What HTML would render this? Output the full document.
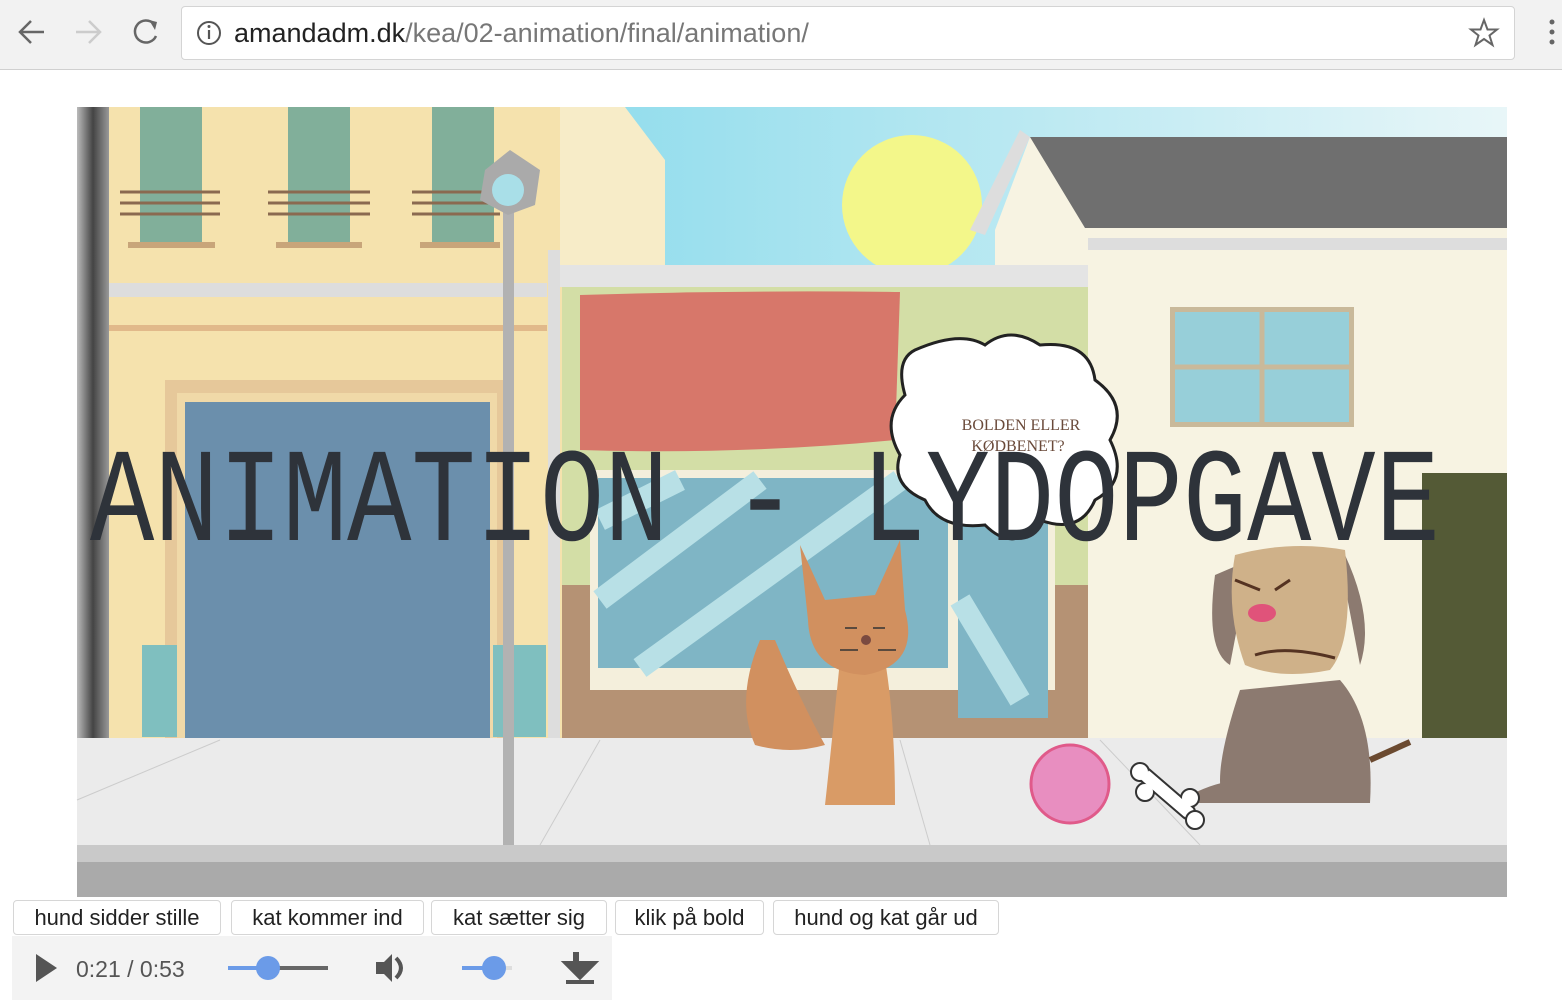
<!DOCTYPE html>
<html><head><meta charset="utf-8"><style>
body{margin:0;width:1562px;height:1004px;overflow:hidden;background:#fff;font-family:"Liberation Sans",sans-serif;position:relative}
.bar{position:absolute;left:0;top:0;width:1562px;height:69px;background:#f2f2f2;border-bottom:1px solid #d0d0d0}
.url{position:absolute;left:181px;top:6px;width:1332px;height:52px;background:#fff;border:1px solid #d4d4d4;border-radius:4px}
.url span{position:absolute;left:52px;top:11px;font-size:27px;color:#222}
.url i{font-style:normal;color:#777}
.btn{position:absolute;top:900px;height:33px;border:1px solid #d6d6d6;border-radius:4px;background:#fff;font-size:22px;line-height:33px;text-align:center;color:#222}
.ctl{position:absolute;left:12px;top:936px;width:600px;height:64px;background:#f3f3f3}
</style></head><body>
<div class="bar">
<svg width="180" height="69" style="position:absolute;left:0;top:0">
<path d="M44 32H20M31 21L20 32L31 43" stroke="#666" stroke-width="2.5" fill="none"/>
<path d="M76 32H100M89 21L100 32L89 43" stroke="#ccc" stroke-width="2.5" fill="none"/>
<path d="M154 24A11 11 0 1 0 156 36" stroke="#666" stroke-width="2.5" fill="none"/><path d="M149 20L157 22L155 30Z" fill="#666"/>
</svg>
<div class="url">
<svg width="40" height="52" style="position:absolute;left:10px;top:0"><circle cx="17" cy="26" r="11" stroke="#555" stroke-width="2" fill="none"/><path d="M17 23V32" stroke="#555" stroke-width="2.2"/><circle cx="17" cy="19.5" r="1.5" fill="#555"/></svg>
<span>amandadm.dk<i>/kea/02-animation/final/animation/</i></span>
<svg width="40" height="52" style="position:absolute;right:10px;top:0"><path d="M20 13L23.5 22.5L33 22.5L25.5 28.5L28.5 38L20 32L11.5 38L14.5 28.5L7 22.5L16.5 22.5Z" stroke="#666" stroke-width="2" fill="none"/></svg>
</div>
<svg width="20" height="69" style="position:absolute;left:1542px;top:0"><circle cx="10" cy="22" r="2.5" fill="#666"/><circle cx="10" cy="32" r="2.5" fill="#666"/><circle cx="10" cy="42" r="2.5" fill="#666"/></svg>
</div>

<svg width="1562" height="900" style="position:absolute;left:0;top:0">
<defs>
<linearGradient id="sky" x1="0" x2="1"><stop offset="0" stop-color="#8fdcec"/><stop offset="1" stop-color="#e8f6f8"/></linearGradient>
<linearGradient id="edge" x1="0" x2="1"><stop offset="0" stop-color="#bbb"/><stop offset="0.5" stop-color="#444"/><stop offset="1" stop-color="#999"/></linearGradient>
</defs>
<rect x="560" y="107" width="947" height="170" fill="url(#sky)"/>
<circle cx="912" cy="205" r="70" fill="#f3f78a"/>
<rect x="107" y="107" width="455" height="633" fill="#f5e2ad"/>
<path d="M560 107H625L665 160V277H560Z" fill="#f7ecc8"/>
<rect x="140" y="107" width="62" height="135" fill="#81af9a"/>
<rect x="288" y="107" width="62" height="135" fill="#81af9a"/>
<rect x="432" y="107" width="62" height="135" fill="#81af9a"/>
<g stroke="#8a6a50" stroke-width="3"><path d="M120 192H220M120 203H220M120 214H220M268 192H370M268 203H370M268 214H370M412 192H500M412 203H500M412 214H500"/></g>
<g stroke="#c8a57a" stroke-width="6"><path d="M128 245H215M276 245H362M420 245H500"/></g>
<rect x="107" y="283" width="440" height="14" fill="#ddd"/>
<rect x="107" y="325" width="440" height="6" fill="#e1b98a"/>
<rect x="165" y="380" width="340" height="360" fill="#e6c89a"/>
<rect x="177" y="393" width="320" height="347" fill="#f0d9a8"/>
<rect x="185" y="402" width="305" height="338" fill="#6b8fac"/>
<rect x="142" y="645" width="35" height="92" fill="#7fbfbf"/>
<rect x="493" y="645" width="53" height="92" fill="#7fbfbf"/>
<rect x="548" y="250" width="12" height="495" fill="#ddd"/>
<rect x="77" y="107" width="32" height="640" fill="url(#edge)"/>
<rect x="562" y="265" width="526" height="475" fill="#d3dea6"/>
<rect x="560" y="265" width="528" height="22" fill="#e4e4e4"/>
<rect x="562" y="585" width="526" height="155" fill="#b59274"/>
<rect x="590" y="470" width="465" height="220" fill="#f4efdc"/>
<rect x="598" y="478" width="350" height="190" fill="#7fb5c5"/>
<rect x="958" y="478" width="90" height="240" fill="#7fb5c5"/>
<path d="M600 520L680 480M600 600L760 480M640 668L900 480M960 600L1020 700" stroke="#b8e0e6" stroke-width="22"/>
<path d="M580 295Q740 290 900 292L895 440Q740 455 580 450Z" fill="#d7776a"/>
<path d="M995 230L1030 137H1507V740H1088V265H995Z" fill="#f7f3e2"/>
<path d="M1030 137H1507V228H1085Z" fill="#6f6f6f"/>
<rect x="1088" y="238" width="419" height="12" fill="#ddd"/>
<path d="M970 230L1020 130L1030 137L985 235Z" fill="#ddd"/>
<rect x="1170" y="307" width="184" height="120" fill="#c9b99a"/>
<rect x="1175" y="312" width="174" height="110" fill="#97cfd9"/>
<path d="M1262 312V422M1175 367H1349" stroke="#c9b99a" stroke-width="5"/>
<rect x="1422" y="473" width="85" height="265" fill="#545a36"/>
<rect x="77" y="738" width="1430" height="108" fill="#ebebeb"/>
<path d="M77 800L220 740M600 740L540 845M900 740L930 845M1100 740L1200 845" stroke="#ccc" stroke-width="1"/>
<rect x="77" y="845" width="1430" height="17" fill="#c9c9c9"/>
<rect x="77" y="862" width="1430" height="35" fill="#aaa"/>
<rect x="503" y="200" width="11" height="645" fill="#b2b2b2"/>
<path d="M485 170L510 150L540 170L535 205L508 215L480 200Z" fill="#aaa"/>
<circle cx="508" cy="190" r="16" fill="#a9dfe8"/>
<!-- cat -->
<path d="M760 640Q735 700 755 745Q790 755 825 745Q800 700 775 640Z" fill="#d1905f"/>
<path d="M840 660Q830 760 825 805H895Q895 720 885 660Z" fill="#d99b66"/>
<path d="M800 545L825 600L875 595L900 540L905 610Q920 665 865 675Q810 672 808 620Z" fill="#d1905f"/>
<circle cx="866" cy="640" r="5" fill="#7a4a40"/>
<path d="M845 628h12M873 628h12M840 650h18M878 650h18" stroke="#333" stroke-width="1.5"/>
<!-- dog -->
<path d="M1240 690Q1210 780 1225 803H1370Q1375 720 1340 680Z" fill="#8c7a70"/>
<path d="M1190 795Q1240 770 1260 790L1250 803H1195Z" fill="#8c7a70"/>
<path d="M1370 760L1410 742" stroke="#6b4a30" stroke-width="6"/>
<path d="M1215 575Q1205 650 1230 665L1250 560ZM1345 555Q1375 620 1360 665L1340 560Z" fill="#8c7a70"/>
<path d="M1235 555Q1290 540 1345 550Q1355 640 1330 670Q1280 680 1245 665Q1225 610 1235 555Z" fill="#cfb189"/>
<ellipse cx="1262" cy="613" rx="14" ry="9" fill="#e0537a"/>
<path d="M1235 580L1260 590M1290 580L1275 590M1255 655Q1285 645 1335 658" stroke="#553322" stroke-width="3" fill="none"/>
<circle cx="1070" cy="784" r="39" fill="#e88ec0" stroke="#e05a8a" stroke-width="3"/>
<path d="M1145 775L1188 812" stroke="#333" stroke-width="16" stroke-linecap="round"/>
<path d="M1145 775L1188 812" stroke="#fff" stroke-width="12" stroke-linecap="round"/>
<circle cx="1140" cy="772" r="9" fill="#fff" stroke="#333" stroke-width="2"/><circle cx="1145" cy="792" r="9" fill="#fff" stroke="#333" stroke-width="2"/>
<circle cx="1190" cy="798" r="9" fill="#fff" stroke="#333" stroke-width="2"/><circle cx="1195" cy="820" r="9" fill="#fff" stroke="#333" stroke-width="2"/>
<path d="M1145 775L1188 812" stroke="#fff" stroke-width="12"/>
<path d="M915 350Q960 330 985 345Q1010 325 1040 345Q1090 340 1095 380Q1130 405 1110 440Q1130 480 1095 500Q1080 535 1040 520Q1015 555 985 525Q940 530 925 500Q890 485 900 455Q880 420 905 395Q895 360 915 350Z" fill="#fff" stroke="#222" stroke-width="3"/>
<text x="1021" y="430" font-family="Liberation Serif,serif" font-size="16" fill="#6a4a3a" text-anchor="middle">BOLDEN ELLER</text>
<text x="1018" y="451" font-family="Liberation Serif,serif" font-size="16" fill="#6a4a3a" text-anchor="middle">KØDBENET?</text>
<text x="90" y="540" font-family="Liberation Mono,monospace" font-size="107" fill="#2e333a" textLength="1350" lengthAdjust="spacingAndGlyphs" transform="translate(0,-135) scale(1,1.25)">ANIMATION - LYDOPGAVE</text>
</svg>

<div class="btn" style="left:13px;width:206px">hund sidder stille</div>
<div class="btn" style="left:231px;width:191px">kat kommer ind</div>
<div class="btn" style="left:431px;width:174px">kat sætter sig</div>
<div class="btn" style="left:615px;width:147px">klik på bold</div>
<div class="btn" style="left:773px;width:224px">hund og kat går ud</div>

<div class="ctl">
<svg width="600" height="64">
<path d="M24 18L45 32L24 46Z" fill="#555"/>
<text x="64" y="41" font-family="Liberation Sans,sans-serif" font-size="23" fill="#555">0:21 / 0:53</text>
<rect x="216" y="30" width="100" height="4" fill="#666"/><rect x="216" y="30" width="40" height="4" fill="#6b9be8"/><circle cx="256" cy="32" r="12" fill="#6b9be8"/>
<path d="M364 26H372L380 18V46L372 38H364Z" fill="#555"/><path d="M384 22Q394 32 384 42" stroke="#555" stroke-width="4" fill="none"/>
<rect x="450" y="30" width="50" height="4" fill="#ddd"/><rect x="450" y="30" width="32" height="4" fill="#6b9be8"/><circle cx="482" cy="32" r="12" fill="#6b9be8"/>
<path d="M564 16V30M556 28L568 40L580 28Z" stroke="#555" stroke-width="6" fill="#555"/><rect x="554" y="44" width="28" height="4" fill="#555"/>
</svg>
</div>
</body></html>
